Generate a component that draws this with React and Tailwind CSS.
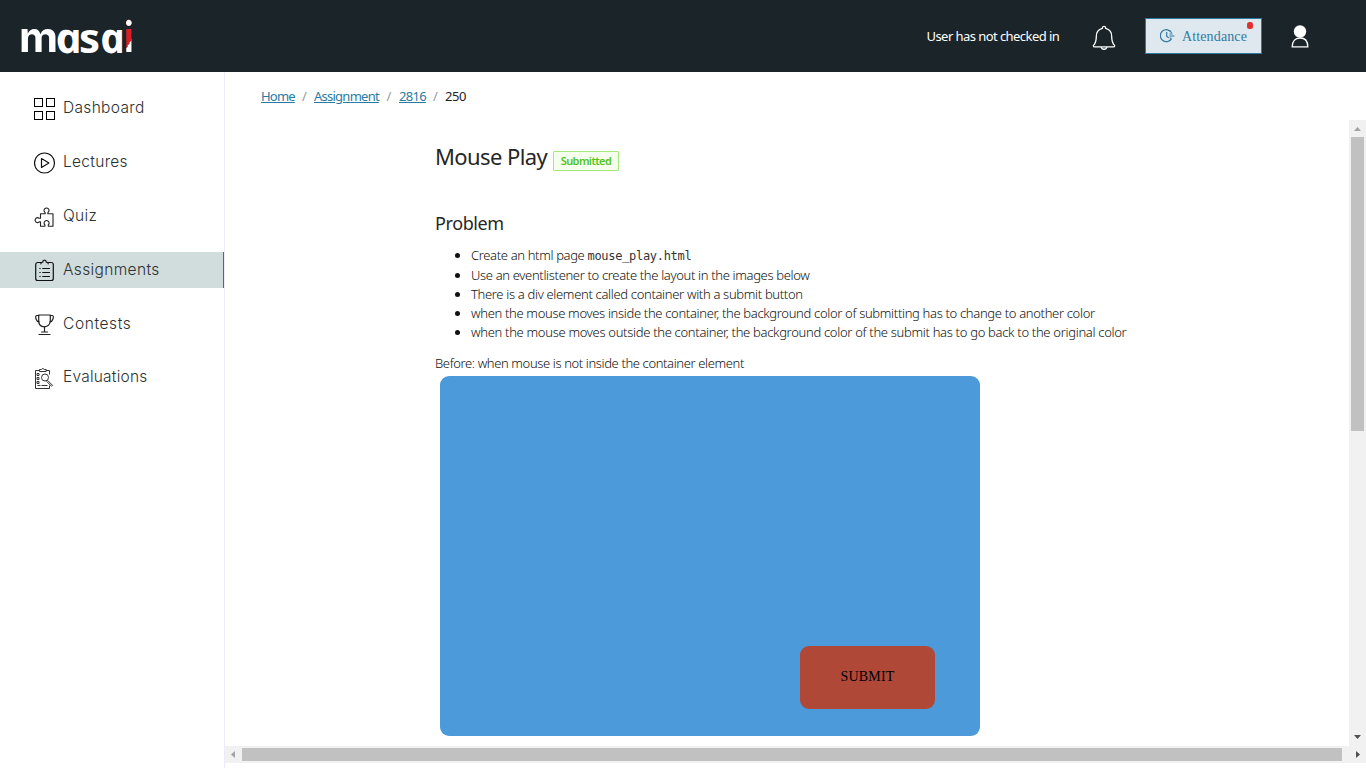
const navItems = [
  { label: 'Dashboard', icon: DashboardIcon, track: 'tracking-[0.33px]' },
  { label: 'Lectures', icon: LecturesIcon, track: 'tracking-[0.3px]' },
  { label: 'Quiz', icon: QuizIcon, track: 'tracking-[0.3px]' },
  { label: 'Assignments', icon: AssignmentsIcon, track: 'tracking-[0.36px]', active: true },
  { label: 'Contests', icon: ContestsIcon, track: 'tracking-[0.6px]' },
  { label: 'Evaluations', icon: EvaluationsIcon, track: 'tracking-[0.22px] -mt-px' },
];

function DashboardIcon() {
  return (
    <svg width="22" height="24" viewBox="0 0 22 24" fill="none" stroke="#000" strokeWidth="1">
      <rect x="0.5" y="1.5" width="8" height="8" />
      <rect x="12.5" y="1.5" width="8" height="8" />
      <rect x="0.5" y="14.5" width="8" height="8" />
      <rect x="12.5" y="14.5" width="8" height="8" />
    </svg>
  );
}

function LecturesIcon() {
  return (
    <svg width="22" height="24" viewBox="0 0 22 24" fill="none" stroke="#111" strokeWidth="1.2">
      <circle cx="10.5" cy="12" r="10" />
      <path d="M7.5 7.6v8.8l7.4-4.4z" strokeLinejoin="round" />
    </svg>
  );
}

function QuizIcon() {
  return (
    <svg width="22" height="24" viewBox="0 0 22 24" fill="none" stroke="#222" strokeWidth="1.1" strokeLinejoin="round">
      <path d="M6.5 8.700h4.700v-1.100a2.500 2.500 0 1 1 2.600 0v1.100h5.200v12.500h-4.700v-1.300a2.500 2.500 0 1 0-3.400 0v1.300H6.500v-4.300H5.200a2.400 2.400 0 1 1 0-3.600h1.300z" />
    </svg>
  );
}

function AssignmentsIcon() {
  return (
    <svg width="22" height="24" viewBox="0 0 22 24" fill="none" stroke="#111" strokeWidth="1.2" strokeLinecap="round" strokeLinejoin="round">
      <path d="M6.600 3.500H3.600A2 2 0 0 0 1.700 5.500v14a2 2 0 0 0 2 2h13.600a2 2 0 0 0 2-2V5.500a2 2 0 0 0-2-2h-3" />
      <path d="M6.800 4.800c0-1.300.8-1.600 1.900-1.700.1-1.200.9-2 1.800-2s1.700.8 1.800 2c1.100.1 1.900.4 1.900 1.700" />
      <path d="M8.700 9.500h6.800M8.700 13.500h6.800M8.700 17.500h6.800M5.800 9.500h.4M5.800 13.500h.4M5.800 17.500h.4" />
    </svg>
  );
}

function ContestsIcon() {
  return (
    <svg width="22" height="24" viewBox="0 0 22 24" fill="none" stroke="#222" strokeWidth="1.2" strokeLinecap="round" strokeLinejoin="round">
      <path d="M4.700 2h11.600v5.500c0 4-2.500 6.300-5.800 6.300S4.700 11.500 4.700 7.500z" />
      <path d="M4.700 2.500H2.600C1.600 2.500 1.500 4.500 2 6s1.500 2.700 3 2.900M16.300 2.500h2.100c1 0 1.100 2 .6 3.500s-1.500 2.700-3 2.900" />
      <path d="M10.500 14v5M7.500 19h6M5 21.500h11" />
    </svg>
  );
}

function EvaluationsIcon() {
  return (
    <svg width="22" height="24" viewBox="0 0 22 24" fill="none" stroke="#333" strokeWidth="1" strokeLinejoin="round">
      <path d="M5.500 4.500h-4v18h14v-3M15.500 8.500V4.500h-3.500" />
      <path d="M5.500 5.500V3.500h2c.3-1.300 2.400-1.300 2.700 0h2v2z" />
      <path d="M3 7.500h2v2h-2zM3 11.500h2v2h-2zM3 15.500h2v2h-2z" />
      <path d="M3.500 19.500h3M7.500 19.500h6" strokeWidth="1.2" />
      <circle cx="11" cy="11.500" r="3.500" />
      <path d="M13.500 14.300l5 5-1 1-5-5.100" />
    </svg>
  );
}

function Logo() {
  return (
    <div className="flex h-[72px] items-start pl-[19px] pt-[11px] font-['Inter'] text-[42px] leading-[51px] font-bold">
      <span className="w-[36px] origin-left scale-x-[1.02]">m</span>
      <span className="w-[24px] origin-center scale-x-[1.06] skew-x-[12deg] font-['Open_Sans'] font-bold italic">a</span>
      <span className="w-[20px] font-['Open_Sans'] font-bold">s</span>
      <span className="w-[25px] origin-center skew-x-[12deg] font-['Open_Sans'] font-bold italic">a</span>
      <span className="origin-left scale-x-[0.85] bg-[linear-gradient(#fff_0_17px,transparent_17px),linear-gradient(127deg,#d91f26_0_62%,#fff_62%)] bg-clip-text text-transparent">i</span>
    </div>
  );
}

function Header() {
  return (
    <header className="flex h-[72px] shrink-0 items-center bg-[#1a2429] text-white">
      <Logo />
      <div className="ml-auto flex items-center pr-[57px]">
        <span className="w-[133px] pt-[2px] pl-[0.5px] whitespace-nowrap font-['Noto_Sans'] text-[13px] tracking-[-0.56px]">User has not checked in</span>
        <svg className="ml-[33px] mt-[3px]" width="24" height="26" viewBox="0 0 24 26" fill="none" stroke="#fff" strokeWidth="1.3" strokeLinejoin="round">
          <path d="M10.300 3.400c0-2.700 3.400-2.700 3.400 0 4 1 6 4 6 8 0 4.500.7 6.800 2.600 8.700.8 1 .3 1.700-.7 1.700H2.400c-1 0-1.500-.7-.7-1.700 1.900-1.900 2.600-4.200 2.600-8.700 0-4 2-7 6-8z" />
          <path d="M9.300 22c.3 3 5.100 3 5.400 0" />
        </svg>
        <div className="relative ml-[29px] flex h-[36px] w-[117px] items-center border border-[#2a7ba3] bg-[#dfe8ee] pl-[14px] text-[#2f7ba1]">
          <svg width="15" height="14" viewBox="0 0 15 14" fill="none" stroke="currentColor" strokeWidth="1.2">
            <path d="M11.600 3.800A6 6 0 1 0 11.600 9.600M6.700 3v4.500l2 1.300M9.500 5h3M9.500 7h5M9.500 9h1.800" />
          </svg>
          <span className="ml-[7px] font-['Liberation_Serif'] text-[14px] tracking-[0.13px]">Attendance</span>
          <span className="absolute right-[8px] top-[3px] h-[7px] w-[6px] rounded-[2.5px] bg-[#e03131]" />
        </div>
        <svg className="ml-[29px]" width="18" height="24" viewBox="0 0 18 24">
          <circle cx="9" cy="7.500" r="6.200" fill="#fff" />
          <path d="M1.200 22.800c0-5.500 2.800-8.800 7.800-8.800s7.800 3.300 7.800 8.800z" fill="none" stroke="#fff" strokeWidth="1.3" />
        </svg>
      </div>
    </header>
  );
}

function Sidebar() {
  return (
    <nav className="flex w-[225px] shrink-0 flex-col gap-[18px] border-r border-[#ebebfa] pt-[18px]">
      {navItems.map(({ label, icon: Icon, active, track }) => (
        <a
          key={label}
          className={
            'flex h-[36px] items-center pl-[34px] font-[\'Inter\'] text-[15.5px] font-light text-[#2c3133] ' +
            track +
            (active ? ' border-r border-[#2a769a] bg-[#d1dcdd]' : '')
          }
        >
          <span className="pt-[1px]"><Icon /></span>
          <span className="ml-[7px] whitespace-nowrap">{label}</span>
        </a>
      ))}
    </nav>
  );
}

function Breadcrumb() {
  return (
    <div className="flex h-[48px] items-center pl-[36px] pt-[2px] font-['Noto_Sans'] text-[13px] text-[#2a7ba3]">
      <span className="w-[34px] whitespace-nowrap tracking-[-0.8px] underline">Home</span>
      <span className="w-[19px] text-center text-[#999]">/</span>
      <span className="w-[65px] whitespace-nowrap tracking-[-0.75px] underline">Assignment</span>
      <span className="w-[20px] text-center text-[#999]">/</span>
      <span className="w-[27px] whitespace-nowrap tracking-[-0.7px] underline">2816</span>
      <span className="w-[19px] text-center text-[#999]">/</span>
      <span className="tracking-[-0.45px] text-[#222]">250</span>
    </div>
  );
}

function Problem() {
  return (
    <article className="min-w-0 flex-1 overflow-hidden pl-[210px] font-['Noto_Sans'] text-[#262626]">
      <div className="flex h-[75px] items-center">
        <h1 className="w-[118px] pb-[2px] whitespace-nowrap text-[22px] tracking-[-0.6px]">Mouse Play</h1>
        <span className="mt-[7px] flex h-[20px] w-[66px] items-center justify-center rounded-[1px] border border-[#a6e77e] bg-[#f6ffed] text-[11px] font-semibold tracking-[-0.6px] text-[#52c41a]">
          Submitted
        </span>
      </div>
      <h2 className="mt-[15px] h-[27px] whitespace-nowrap text-[18px] leading-[27px] tracking-[-0.4px]">Problem</h2>
      <ul className="mt-[9px] list-disc pl-[36px] text-[13px] leading-[19px] font-light whitespace-nowrap text-[#111]">
        <li className="h-[20px] tracking-[-0.35px]">
          Create an html page <code className="font-['DejaVu_Sans_Mono'] text-[12px] leading-none tracking-[-0.3px] text-[#333]">mouse_play.html</code>
        </li>
        <li className="tracking-[-0.34px]">Use an eventlistener to create the layout in the images below</li>
        <li className="tracking-[-0.33px]">There is a div element called container with a submit button</li>
        <li className="tracking-[-0.33px]">when the mouse moves inside the container, the background color of submitting has to change to another color</li>
        <li className="tracking-[-0.31px]">when the mouse moves outside the container, the background color of the submit has to go back to the original color</li>
      </ul>
      <p className="mt-[12px] h-[19px] whitespace-nowrap text-[13px] leading-[19px] font-light tracking-[-0.38px] text-[#111]">
        Before: when mouse is not inside the container element
      </p>
      <div className="ml-[5px] mt-[2.5px] flex h-[360.5px] w-[540px] items-end justify-end rounded-[9px] bg-[#4c9ad9] pb-[27px] pr-[45px]">
        <div className="flex h-[63.5px] w-[135px] items-center justify-center rounded-[9px] bg-[#b04838] pb-[2px] font-['Liberation_Serif'] text-[14px] tracking-[0.15px] text-black">
          SUBMIT
        </div>
      </div>
    </article>
  );
}

function VerticalScrollbar() {
  return (
    <div className="flex w-[17px] shrink-0 flex-col items-center bg-[#f1f1f1]">
      <svg width="17" height="17" viewBox="0 0 17 17"><path d="M5 11l3.500-4 3.500 4z" fill="#a3a3a3" /></svg>
      <div className="h-[294px] w-[13px] bg-[#c1c1c1]" />
      <svg className="mt-auto" width="17" height="17" viewBox="0 0 17 17"><path d="M5 6l3.500 4 3.500-4z" fill="#505050" /></svg>
    </div>
  );
}

function HorizontalScrollbar() {
  return (
    <div className="flex h-[17px] shrink-0 items-center bg-[#f1f1f1]">
      <svg width="17" height="17" viewBox="0 0 17 17"><path d="M10 5l-4 3.500 4 3.500z" fill="#a3a3a3" /></svg>
      <div className="h-[13px] w-[1100px] bg-[#c1c1c1]" />
      <svg className="ml-[7px]" width="17" height="17" viewBox="0 0 17 17"><path d="M7 5l4 3.500-4 3.500z" fill="#505050" /></svg>
    </div>
  );
}

export default function App() {
  return (
    <div className="flex h-[768px] w-[1366px] flex-col overflow-hidden bg-white">
      <Header />
      <div className="flex min-h-0 flex-1">
        <Sidebar />
        <main className="flex min-w-0 flex-1 flex-col pb-[5px]">
          <Breadcrumb />
          <div className="flex min-h-0 flex-1">
            <Problem />
            <VerticalScrollbar />
          </div>
          <HorizontalScrollbar />
        </main>
      </div>
    </div>
  );
}
